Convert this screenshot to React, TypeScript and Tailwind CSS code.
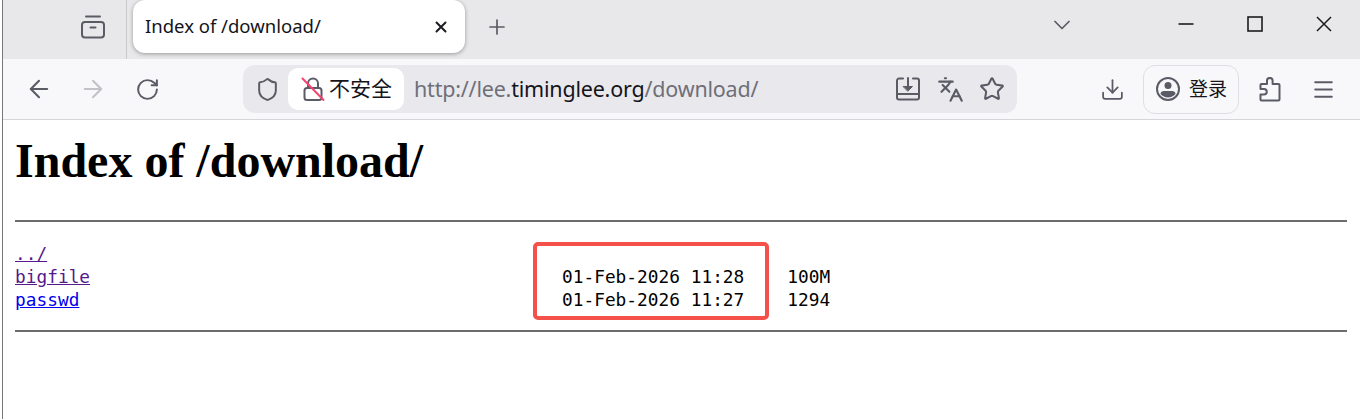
import React from 'react';
import { ArrowLeft, ArrowRight, ChevronDown, Download, Languages, Menu, Plus, RotateCw, Shield, Star } from 'lucide-react';

const uiFont = "font-['Noto_Sans','Noto_Sans_CJK_SC',sans-serif]";

function Slot({ w, children }: { w: string; children: React.ReactNode }) {
  return <div className={`${w} h-full flex items-center justify-center shrink-0`}>{children}</div>;
}

function TabGroups() {
  return (
    <svg width="26" height="26" viewBox="0 0 26 26" fill="none" stroke="#5b5b66" strokeWidth="2" strokeLinecap="round" strokeLinejoin="round">
      <path d="M6 2.5h14" />
      <rect x="2" y="8" width="22" height="15.5" rx="3" />
      <path d="M10.5 13.5h5" />
    </svg>
  );
}

function NotSecureLock() {
  return (
    <svg width="24" height="26" viewBox="0 0 24 26" fill="none" strokeLinecap="round">
      <path d="M7 12V7.5a5 5 0 0 1 10 0V12" stroke="#5b5b66" strokeWidth="2" />
      <rect x="3.5" y="12" width="17" height="12" rx="2.5" stroke="#5b5b66" strokeWidth="2" />
      <path d="M1.5 2.5 22.5 24" stroke="#f5446f" strokeWidth="2" />
    </svg>
  );
}

function SavePage() {
  return (
    <svg width="24" height="24" viewBox="0 0 24 24" fill="none" stroke="#5b5b66" strokeWidth="2" strokeLinecap="round" strokeLinejoin="round">
      <path d="M7 1.5H3a2 2 0 0 0-2 2v17a2 2 0 0 0 2 2h18a2 2 0 0 0 2-2v-17a2 2 0 0 0-2-2h-4" />
      <path d="M1 17h22" />
      <path d="M12 1v10" />
      <path d="M7.5 9.5h9L12 14z" fill="#5b5b66" strokeWidth="1" />
    </svg>
  );
}

function Account() {
  return (
    <svg width="26" height="26" viewBox="0 0 26 26" fill="none">
      <circle cx="13" cy="13" r="11" stroke="#5b5b66" strokeWidth="2" />
      <circle cx="13" cy="9.5" r="3.5" fill="#5b5b66" />
      <path d="M5.5 18c0-2 1.5-3 3.5-3h8c2 0 3.5 1 3.5 3a10 10 0 0 1-15 0z" fill="#5b5b66" />
    </svg>
  );
}

function Puzzle() {
  return (
    <svg width="24" height="25" viewBox="0 0 24 25" fill="none" stroke="#5b5b66" strokeWidth="2" strokeLinejoin="round">
      <path d="M9 7V3.7a2.8 2.8 0 0 1 5.6 0V7h5.9a1 1 0 0 1 1 1v14.5a1 1 0 0 1-1 1h-17a1 1 0 0 1-1-1v-5H6a2.7 2.7 0 0 0 0-5.5H2.5V8a1 1 0 0 1 1-1z" />
    </svg>
  );
}

function WinMin() {
  return (
    <svg width="16" height="16" viewBox="0 0 16 16" stroke="#1c1c1e" strokeWidth="1.6">
      <path d="M0.5 8h15" />
    </svg>
  );
}

function WinMax() {
  return (
    <svg width="16" height="16" viewBox="0 0 16 16" fill="none" stroke="#1c1c1e" strokeWidth="1.6">
      <rect x="1" y="1" width="14" height="14" />
    </svg>
  );
}

function WinClose() {
  return (
    <svg width="16" height="16" viewBox="0 0 16 16" stroke="#1c1c1e" strokeWidth="1.5">
      <path d="M1 1l14 14M15 1 1 15" />
    </svg>
  );
}

function TabClose() {
  return (
    <svg width="12" height="12" viewBox="0 0 12 12" stroke="#1c1b22" strokeWidth="2" strokeLinecap="round">
      <path d="M1.5 1.5l9 9M10.5 1.5l-9 9" />
    </svg>
  );
}

function App() {
  return (
    <div className={`relative w-[1360px] h-[419px] overflow-hidden bg-white pl-[2px] ${uiFont}`}>
      <div className="h-full border-l border-[#77777a] flex flex-col">
        {/* tab strip */}
        <div className="h-[59px] bg-[#e8e8ea] flex items-start shrink-0">
          <div className="w-[124px] h-full border-r border-[#c9c9cc] flex items-center justify-end pr-[20px] pb-[6px]">
            <TabGroups />
          </div>
          <div className="ml-[6px] w-[332px] h-[53px] bg-white rounded-xl shadow-[0_1px_4px_rgba(0,0,0,0.35)] flex items-center pl-[12px] pr-[18px]">
            <span className="mb-[2px] text-[18.5px] text-[#15141a] flex-1">Index of /download/</span>
            <TabClose />
          </div>
          <div className="w-[64px] h-[54px] flex items-center justify-center">
            <Plus size={24} strokeWidth={1.7} color="#5b5b66" />
          </div>
          <div className="flex-1" />
          <div className="w-[60px] h-[50px] mr-[59px] flex items-center justify-center">
            <ChevronDown size={28} strokeWidth={1.5} color="#5b5b66" />
          </div>
          <div className="w-[69px] h-[48px] flex items-center justify-center"><WinMin /></div>
          <div className="w-[69px] h-[48px] flex items-center justify-center"><WinMax /></div>
          <div className="w-[69px] h-[48px] flex items-center justify-center"><WinClose /></div>
          <div className="w-[2px]" />
        </div>

        {/* toolbar */}
        <div className="h-[61px] bg-[#f8f8fb] border-b border-[#d6d6d9] flex items-center pl-[9px] shrink-0">
          <Slot w="w-[54px]"><ArrowLeft size={28} strokeWidth={1.8} color="#5b5b66" /></Slot>
          <Slot w="w-[54px]"><ArrowRight size={28} strokeWidth={1.8} color="#c2c2c7" /></Slot>
          <Slot w="w-[54px]"><RotateCw size={25} strokeWidth={1.9} color="#5b5b66" /></Slot>
          <div className="ml-[69px] w-[774px] h-[48px] bg-[#e9e9ed] rounded-xl flex items-center pl-[12px] pr-[4px] shrink-0">
            <Shield size={25} strokeWidth={1.9} color="#5b5b66" />
            <div className="ml-[8px] w-[116px] h-[42px] bg-white rounded-[10px] flex items-center pl-[13px] shrink-0">
              <NotSecureLock />
              <span className="ml-[4px] mb-[2px] text-[21px] leading-none text-[#15141a]">不安全</span>
            </div>
            <div className="ml-[10px] flex-1 text-[21.5px] tracking-[-0.2px] text-[#6f6f78] whitespace-nowrap">
              http://lee.<span className="text-[#15141a]">timinglee.org</span>/download/
            </div>
            <Slot w="w-[42px]"><SavePage /></Slot>
            <Slot w="w-[42px]"><Languages size={27} strokeWidth={1.9} color="#5b5b66" /></Slot>
            <Slot w="w-[42px]"><Star size={26} strokeWidth={1.9} color="#5b5b66" /></Slot>
          </div>
          <div className="ml-[67px]">
            <Slot w="w-[56px]"><Download size={25} strokeWidth={1.7} color="#5b5b66" /></Slot>
          </div>
          <div className="ml-[3px] w-[96px] h-[49px] border border-[#dfdfe3] rounded-xl flex items-center pl-[11px] shrink-0">
            <Account />
            <span className="ml-[8px] text-[19px] leading-none text-[#15141a]">登录</span>
          </div>
          <Slot w="w-[62px]"><Puzzle /></Slot>
          <Slot w="w-[44px]"><Menu size={25} strokeWidth={1.8} color="#5b5b66" /></Slot>
        </div>

        {/* directory listing */}
        <div className="flex-1 pl-[12px] pr-[13px] text-black">
          <h1 className="mt-[13px] h-[55px] text-[48px] leading-[55px] font-bold font-['Liberation_Serif',serif]">Index of /download/</h1>
          <div className="mt-[32px] h-[2px] bg-[#6c6c6c]" />
          <pre className="mt-[20px] text-[17.8px] tracking-[0.02px] leading-[23px] font-['DejaVu_Sans_Mono',monospace]">
            <a href="#" className="underline text-[#551a8b]">../</a>{'\n'}
            <a href="#" className="underline text-[#551a8b]">bigfile</a>{'                                            01-Feb-2026 11:28    100M\n'}
            <a href="#" className="underline text-[#0000ee]">passwd</a>{'                                             01-Feb-2026 11:27    1294'}
          </pre>
          <div className="mt-[19px] h-[2px] bg-[#6c6c6c]" />
        </div>
      </div>

      {/* annotation drawn over the page */}
      <div className="absolute left-[533px] top-[242px] w-[236px] h-[78px] border-4 border-[#f4514a] rounded-[5px]" />
    </div>
  );
}

export default App;
